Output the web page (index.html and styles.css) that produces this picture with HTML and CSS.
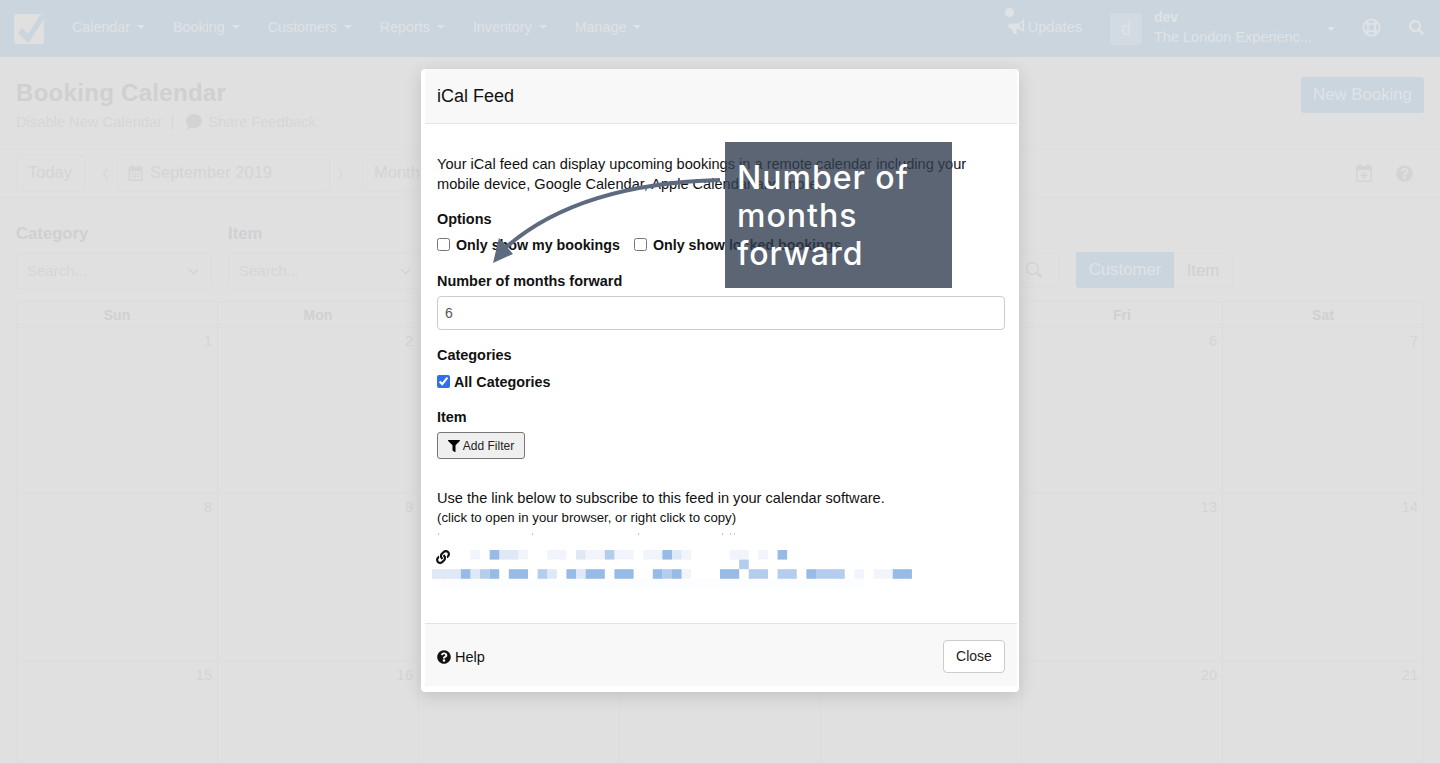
FILE: index.html
```html
<!DOCTYPE html>
<html lang="en">

<head>
  <meta charset="UTF-8">
  <meta name="viewport" content="width=device-width, initial-scale=1.0">
  <title>Booking Calendar</title>
  <link rel="stylesheet" href="styles.css">
</head>

<body>
  <div class="page">
    <nav class="navbar">
      <div class="logo">
        <svg viewBox="0 0 30 30" width="30" height="30"><path class="logo-check" d="M8 14l6 6L26 1h4v4L15 28h-2L4 19z"/></svg>
      </div>
      <a class="nav-link">Calendar<i class="caret"></i></a>
      <a class="nav-link">Booking<i class="caret"></i></a>
      <a class="nav-link">Customers<i class="caret"></i></a>
      <a class="nav-link">Reports<i class="caret"></i></a>
      <a class="nav-link">Inventory<i class="caret"></i></a>
      <a class="nav-link">Manage<i class="caret"></i></a>

      <div class="nav-right">
        <a class="updates">
          <i class="updates-dot"></i>
          <svg class="nav-icon" viewBox="0 0 20 18" width="18" height="16"><path d="M18 0v14l-1 0-5-3H9l1 6H6L4 11H3a3 3 0 0 1 0-6h9l5-4zM16 3.500l-3 2.500v3.500l3 2z"/></svg>
          Updates
        </a>
        <div class="avatar">d</div>
        <div class="account">
          <div class="account-name">dev</div>
          <div class="account-org">The London Experienc...</div>
        </div>
        <i class="caret account-caret"></i>
        <svg class="help-ring" viewBox="0 0 20 20" width="19" height="19">
          <circle cx="10" cy="10" r="8.500"/>
          <circle cx="10" cy="10" r="4"/>
          <path d="M4 4l3.200 3.200M16 4l-3.200 3.200M4 16l3.200-3.200M16 16l-3.200-3.200"/>
        </svg>
        <svg class="nav-icon" viewBox="0 0 512 512" width="15" height="15"><path d="M505 442.700L405.300 343c-4.500-4.500-10.600-7-17-7H372c27.600-35.300 44-79.700 44-128C416 93.100 322.900 0 208 0S0 93.100 0 208s93.100 208 208 208c48.300 0 92.700-16.400 128-44v16.300c0 6.400 2.500 12.500 7 17l99.700 99.700c9.400 9.400 24.600 9.400 33.900 0l28.300-28.300c9.400-9.400 9.400-24.600.1-34zM208 336c-70.700 0-128-57.200-128-128 0-70.700 57.200-128 128-128 70.700 0 128 57.200 128 128 0 70.700-57.200 128-128 128z"/></svg>
      </div>
    </nav>

    <header class="page-head">
      <div>
        <h1>Booking Calendar</h1>
        <div class="head-links">
          <span>Disable New Calendar</span>
          <span class="head-sep"></span>
          <svg class="bubble" viewBox="0 0 16 16" width="16" height="16"><path d="M8 0c4.400 0 8 3 8 7s-3.600 7-8 7c-1 0-2-.2-3-.5C4 14.500 2.500 16 1 16c1-1 1.600-2.500 1.500-3.800C1 11 0 9.100 0 7c0-4 3.600-7 8-7z"/></svg>
          <span>Share Feedback</span>
        </div>
      </div>
      <a class="btn-new">New Booking</a>
    </header>

    <section class="toolbar">
      <a class="tool-btn today">Today</a>
      <span class="chevron chevron-left"></span>
      <div class="tool-btn date-box">
        <svg viewBox="0 0 14 16" width="15" height="16"><path d="M3 0h2v2h4V0h2v2h3v14H0V2h3zM1.500 6v8.500h11V6zM3 7.500h2v2H3zm3 0h2v2H6zm3 0h2v2H9zm-6 3h2v2H3zm3 0h2v2H6zm3 0h2v2H9z"/></svg>
        September 2019
      </div>
      <span class="chevron chevron-right"></span>
      <a class="tool-btn month">Month</a>
      <div class="tool-right">
        <svg viewBox="0 0 16 18" width="16" height="18"><path d="M3 0h2v2h6V0h2v2h3v16H0V2h3zM1.500 6v10.500h13V6zM7.200 8h1.600v2.700h2.700v1.600H8.800V15H7.200v-2.700H4.500v-1.600h2.700z"/></svg>
        <svg viewBox="0 0 512 512" width="17" height="17"><path d="M504 256c0 136.997-111.043 248-248 248S8 392.997 8 256C8 119.083 119.043 8 256 8s248 111.083 248 248zM262.655 90c-54.497 0-89.255 22.957-116.549 63.758-3.536 5.286-2.353 12.415 2.715 16.258l34.699 26.310c5.205 3.947 12.621 3.008 16.665-2.122 17.864-22.658 30.113-35.797 57.303-35.797 20.429 0 45.698 13.148 45.698 32.958 0 14.976-12.363 22.667-32.534 33.976C247.128 238.528 216 254.941 216 296v4c0 6.627 5.373 12 12 12h56c6.627 0 12-5.373 12-12v-1.333c0-28.462 83.186-29.647 83.186-106.667 0-58.002-60.165-102-116.531-102zM256 338c-25.365 0-46 20.635-46 46 0 25.364 20.635 46 46 46s46-20.636 46-46c0-25.365-20.635-46-46-46z"/></svg>
      </div>
    </section>

    <section class="filters">
      <div class="filter">
        <label>Category</label>
        <div class="select">Search...<span class="select-arrow"></span></div>
      </div>
      <div class="filter">
        <label>Item</label>
        <div class="select">Search...<span class="select-arrow"></span></div>
      </div>
      <div class="filter-right">
        <div class="search-box">
          <svg viewBox="0 0 512 512" width="16" height="16"><path d="M505 442.700L405.300 343c-4.500-4.500-10.600-7-17-7H372c27.600-35.300 44-79.700 44-128C416 93.100 322.900 0 208 0S0 93.100 0 208s93.100 208 208 208c48.300 0 92.700-16.400 128-44v16.300c0 6.400 2.500 12.500 7 17l99.700 99.700c9.400 9.400 24.600 9.400 33.900 0l28.300-28.300c9.400-9.400 9.400-24.600.1-34zM208 368c-88.400 0-160-71.600-160-160 0-88.400 71.600-160 160-160 88.400 0 160 71.600 160 160 0 88.400-71.600 160-160 160z"/></svg>
        </div>
        <div class="toggle">
          <a class="toggle-on">Customer</a>
          <a class="toggle-off">Item</a>
        </div>
      </div>
    </section>

    <!-- middle columns sit behind the modal, so their labels are left out -->
    <section class="calendar">
      <div class="weekday">Sun</div>
      <div class="weekday">Mon</div>
      <div class="weekday"></div>
      <div class="weekday"></div>
      <div class="weekday"></div>
      <div class="weekday">Fri</div>
      <div class="weekday">Sat</div>

      <div class="day">1</div>
      <div class="day">2</div>
      <div class="day"></div>
      <div class="day"></div>
      <div class="day"></div>
      <div class="day">6</div>
      <div class="day">7</div>

      <div class="day">8</div>
      <div class="day">9</div>
      <div class="day"></div>
      <div class="day"></div>
      <div class="day"></div>
      <div class="day">13</div>
      <div class="day">14</div>

      <div class="day">15</div>
      <div class="day">16</div>
      <div class="day"></div>
      <div class="day"></div>
      <div class="day"></div>
      <div class="day">20</div>
      <div class="day">21</div>
    </section>
  </div>

  <div class="modal">
    <div class="modal-header">iCal Feed</div>

    <div class="modal-body">
      <p class="intro">Your iCal feed can display upcoming bookings in a remote calendar including your mobile device, Google Calendar, Apple Calendar and more.</p>

      <div class="field-title options-title">Options</div>
      <div class="check-row">
        <label class="check"><input type="checkbox"> Only show my bookings</label>
        <label class="check"><input type="checkbox"> Only show locked bookings</label>
      </div>

      <div class="field-title months-title">Number of months forward</div>
      <input class="text-input" type="text" value="6">

      <div class="field-title categories-title">Categories</div>
      <label class="check all-cats"><input type="checkbox" checked> All Categories</label>

      <div class="field-title item-title">Item</div>
      <button class="btn-filter">
        <svg viewBox="0 0 512 512" width="12" height="12"><path d="M487.976 0H24.028C2.710 0-8.047 25.866 7.058 40.971L192 225.941V432c0 7.831 3.821 15.170 10.237 19.662l80 55.980C298.020 518.690 320 507.493 320 487.980V225.941l184.947-184.970C520.021 25.896 509.338 0 487.976 0z"/></svg>
        Add Filter
      </button>

      <p class="link-intro">Use the link below to subscribe to this feed in your calendar software.</p>
      <p class="link-hint">(click to open in your browser, or right click to copy)</p>
      <!-- third line of the hint is covered, only the tips of a few letters show -->
      <svg class="link-tips" viewBox="0 0 300 9" width="300" height="9">
        <path d="M1 5h1v2H1zM95 5h1v2h-1zM201 5h1v2h-1zM285 5h1v2h-1zM293 5h1v2h-1zM297 5h1v2h-1z"/>
      </svg>

      <div class="feed-link">
        <!-- url is pixelated in the shot, one rect per block -->
        <svg class="feed-pixels" viewBox="0 0 50 4" width="480" height="38.400">
          <g class="px-vl">
            <rect x="4" y="0" width="1" height="1"/><rect x="9" y="0" width="1" height="1"/><rect x="12" y="0" width="2" height="1"/><rect x="16" y="0" width="2" height="1"/><rect x="19" y="0" width="2" height="1"/><rect x="22" y="0" width="2" height="1"/><rect x="26" y="0" width="1" height="1"/><rect x="31" y="0" width="2" height="1"/><rect x="34" y="0" width="1" height="1"/>
            <rect x="26" y="2" width="1" height="1"/><rect x="44" y="2" width="1" height="1"/><rect x="46" y="2" width="2" height="1"/>
            <rect x="1" y="3" width="44" height="1" class="px-faint"/>
          </g>
          <g class="px-l">
            <rect x="7" y="0" width="2" height="1"/><rect x="15" y="0" width="1" height="1"/><rect x="25" y="0" width="1" height="1"/>
            <rect x="0" y="2" width="3" height="1"/><rect x="4" y="2" width="1" height="1"/><rect x="12" y="2" width="1" height="1"/><rect x="15" y="2" width="1" height="1"/>
          </g>
          <g class="px-m">
            <rect x="18" y="0" width="1" height="1"/><rect x="32" y="1" width="1" height="1"/>
            <rect x="5" y="2" width="1" height="1"/><rect x="24" y="2" width="1" height="1"/><rect x="33" y="2" width="2" height="1"/><rect x="36" y="2" width="2" height="1"/><rect x="40" y="2" width="3" height="1"/><rect x="11" y="2" width="1" height="1"/>
          </g>
          <g class="px-d">
            <rect x="6" y="0" width="1" height="1"/><rect x="24" y="0" width="1" height="1"/><rect x="36" y="0" width="1" height="1"/>
            <rect x="3" y="2" width="1" height="1"/><rect x="6" y="2" width="1" height="1"/><rect x="8" y="2" width="2" height="1"/><rect x="14" y="2" width="1" height="1"/><rect x="16" y="2" width="2" height="1"/><rect x="19" y="2" width="2" height="1"/><rect x="23" y="2" width="1" height="1"/><rect x="25" y="2" width="1" height="1"/><rect x="30" y="2" width="2" height="1"/><rect x="39" y="2" width="1" height="1"/><rect x="48" y="2" width="2" height="1"/>
          </g>
        </svg>
        <svg class="link-icon" viewBox="0 0 512 512" width="14" height="14"><path d="M326.612 185.391c59.747 59.809 58.927 155.698.36 214.590-.11.120-.24.250-.36.370l-67.200 67.200c-59.270 59.270-155.699 59.262-214.960 0-59.270-59.260-59.270-155.700 0-214.960l37.106-37.106c9.840-9.840 26.786-3.300 27.294 10.606.648 17.722 3.826 35.527 9.690 52.721 1.986 5.822.567 12.262-3.783 16.612l-13.087 13.087c-28.026 28.026-28.905 73.660-1.155 101.960 28.024 28.579 74.086 28.749 102.325.510l67.200-67.190c28.191-28.191 28.073-73.757 0-101.830-3.701-3.694-7.429-6.564-10.341-8.569a16.037 16.037 0 0 1-6.947-12.606c-.396-10.567 3.348-21.456 11.698-29.806l21.054-21.055c5.521-5.521 14.182-6.199 20.584-1.731a152.482 152.482 0 0 1 20.522 17.197zM467.547 44.449c-59.261-59.262-155.690-59.270-214.960 0l-67.200 67.200c-.120.120-.250.250-.360.370-58.566 58.892-59.387 154.781.360 214.590a152.454 152.454 0 0 0 20.521 17.196c6.402 4.468 15.064 3.789 20.584-1.731l21.054-21.055c8.350-8.350 12.094-19.239 11.698-29.806a16.037 16.037 0 0 0-6.947-12.606c-2.912-2.005-6.640-4.875-10.341-8.569-28.073-28.073-28.191-73.639 0-101.830l67.200-67.190c28.239-28.239 74.300-28.069 102.325.510 27.750 28.300 26.872 73.934-1.155 101.960l-13.087 13.087c-4.350 4.350-5.769 10.790-3.783 16.612 5.864 17.194 9.042 34.999 9.690 52.721.509 13.906 17.454 20.446 27.294 10.606l37.106-37.106c59.271-59.259 59.271-155.699.001-214.959z"/></svg>
      </div>
    </div>

    <div class="modal-footer">
      <a class="help-link">
        <svg viewBox="0 0 512 512" width="14" height="14"><path d="M504 256c0 136.997-111.043 248-248 248S8 392.997 8 256C8 119.083 119.043 8 256 8s248 111.083 248 248zM262.655 90c-54.497 0-89.255 22.957-116.549 63.758-3.536 5.286-2.353 12.415 2.715 16.258l34.699 26.310c5.205 3.947 12.621 3.008 16.665-2.122 17.864-22.658 30.113-35.797 57.303-35.797 20.429 0 45.698 13.148 45.698 32.958 0 14.976-12.363 22.667-32.534 33.976C247.128 238.528 216 254.941 216 296v4c0 6.627 5.373 12 12 12h56c6.627 0 12-5.373 12-12v-1.333c0-28.462 83.186-29.647 83.186-106.667 0-58.002-60.165-102-116.531-102zM256 338c-25.365 0-46 20.635-46 46 0 25.364 20.635 46 46 46s46-20.636 46-46c0-25.365-20.635-46-46-46z"/></svg>
        Help
      </a>
      <button class="btn-close">Close</button>
    </div>
  </div>

  <!-- tutorial annotation over the modal -->
  <div class="callout">Number of months forward</div>
  <svg class="callout-arrow" viewBox="0 0 240 100" width="240" height="100">
    <path class="arrow-line" d="M230 5C150 7 70 24 14 74"/>
    <path class="arrow-head" d="M3 88L9 63L23 79z"/>
  </svg>
</body>

</html>
```

FILE: styles.css
```css
* {
  margin: 0;
  padding: 0;
  box-sizing: border-box;
}

html,
body {
  height: 100%;
  overflow: hidden;
}

body {
  position: relative;
  font-family: "Liberation Sans", Arial, sans-serif;
  font-size: 14px;
  background-color: #e0e0e0;
  color: #cfd0d2;
}

.page {
  height: 763px;
  overflow: hidden;
}

/* navbar */
.navbar {
  display: flex;
  align-items: center;
  height: 57px;
  padding-left: 14px;
  background-color: #cbd5dd;
  color: #dfe3e6;
}

.logo {
  width: 30px;
  height: 30px;
  margin-right: 28px;
  background-color: #e0e0e0;
  border-radius: 3px;
}

.logo svg {
  display: block;
}

.logo-check {
  fill: #cbd5dd;
}

.nav-link {
  display: flex;
  align-items: center;
  margin: -3px 28px 0 0;
  font-size: 14.300px;
}

.caret {
  flex: none;
  width: 8px;
  height: 4px;
  margin-left: 7px;
  border-top: 4px solid #dfe3e6;
  border-left: 4px solid transparent;
  border-right: 4px solid transparent;
}

.nav-right {
  display: flex;
  align-items: center;
  margin-left: auto;
  padding-right: 16px;
}

.nav-icon {
  fill: #dfe3e6;
}

.updates {
  position: relative;
  display: flex;
  align-items: center;
  gap: 2px;
  margin: -3px 28px 0 0;
  font-size: 14.600px;
}

.updates-dot {
  position: absolute;
  top: -11px;
  left: -3px;
  width: 9px;
  height: 9px;
  background-color: #dfe3e6;
  border-radius: 50%;
}

.avatar {
  width: 32px;
  height: 32px;
  margin-right: 12px;
  background-color: #d3dbe2;
  border-radius: 3px;
  font-size: 18px;
  line-height: 33px;
  text-align: center;
}

.account {
  width: 169px;
  margin-top: -3px;
}

.account-name {
  font-weight: 700;
  line-height: 20px;
}

.account-org {
  font-size: 14.500px;
  line-height: 20px;
  white-space: nowrap;
}

.account-caret {
  margin-left: 4px;
}

.help-ring {
  margin: -3px 28px 0 27px;
  fill: none;
  stroke: #dfe3e6;
  stroke-width: 2;
}

.help-ring path {
  stroke-width: 3.500;
}

.nav-right > .nav-icon {
  margin-top: -3px;
}

/* page header */
.page-head {
  display: flex;
  justify-content: space-between;
  height: 91px;
  padding: 20px 16px 0;
}

.page-head h1 {
  font-size: 24px;
  line-height: 32px;
  font-weight: 700;
  letter-spacing: 0.3px;
}

.head-links {
  display: flex;
  align-items: center;
  height: 20px;
  margin-top: 3px;
  font-size: 14.700px;
  color: #d6d6d7;
}

.head-sep {
  width: 1px;
  height: 14px;
  margin: 0 13px 0 10px;
  background-color: #d6d6d6;
}

.bubble {
  margin-right: 6px;
  fill: #d2d3d5;
}

.btn-new {
  width: 123px;
  height: 36px;
  background-color: #cbd5dd;
  border-radius: 3px;
  color: #dfe3e6;
  font-size: 16.800px;
  line-height: 36px;
  text-align: center;
}

/* toolbar */
.toolbar {
  display: flex;
  align-items: center;
  height: 50px;
  padding: 0 16px;
  border-top: 1px solid #dddddd;
  border-bottom: 1px solid #dedede;
}

.tool-btn {
  display: flex;
  flex: none;
  align-items: center;
  height: 36px;
  padding: 0 11px 1px;
  border: 1px solid #dddddd;
  border-radius: 4px;
  font-size: 16.500px;
  color: #d3d4d6;
}

.today {
  width: 69px;
}

.date-box {
  gap: 7px;
  width: 213px;
  padding-left: 10px;
}

.date-box svg {
  fill: #d3d4d6;
}

.month {
  width: 100px;
}

.chevron {
  flex: none;
  width: 9px;
  height: 9px;
  border-left: 1px solid #d2d2d2;
  border-bottom: 1px solid #d2d2d2;
}

.chevron-left {
  margin: 0 5.500px 0 17.500px;
  transform: scaleX(0.7) rotate(45deg);
}

.chevron-right {
  margin: 0 19.500px 0 3.500px;
  transform: scaleX(0.7) rotate(225deg);
}

.tool-right {
  display: flex;
  align-items: center;
  gap: 24px;
  margin-left: auto;
  padding-right: 11px;
}

.tool-right svg {
  fill: #d3d4d6;
}

/* filters */
.filters {
  display: flex;
  gap: 16px;
  height: 103px;
  padding: 25px 16px 0;
}

.filter {
  flex: none;
  width: 196px;
}

.filter label {
  display: block;
  font-size: 16.700px;
  font-weight: 700;
  line-height: 22px;
  margin-bottom: 8px;
}

.select {
  position: relative;
  height: 36px;
  padding-left: 10px;
  border: 1px solid #dddddd;
  border-radius: 4px;
  font-size: 15px;
  line-height: 34px;
  color: #d6d6d7;
}

.select-arrow {
  position: absolute;
  top: 12px;
  right: 14px;
  width: 7px;
  height: 7px;
  border-right: 1px solid #cfcfcf;
  border-bottom: 1px solid #cfcfcf;
  transform: rotate(45deg);
}

.filter-right {
  display: flex;
  align-items: flex-start;
  gap: 16px;
  margin-left: auto;
  padding: 29px 191px 0 0;
}

.search-box {
  display: flex;
  align-items: center;
  justify-content: flex-end;
  width: 120px;
  height: 36px;
  padding-right: 17px;
  border: 1px solid #dddddd;
  border-radius: 4px;
}

.search-box svg {
  fill: #d3d4d6;
}

.toggle {
  display: flex;
  height: 36px;
  border: 1px solid #dddddd;
  border-radius: 3px;
  font-size: 16.800px;
  line-height: 36px;
}

.toggle-on {
  width: 98px;
  margin: -1px 0 -1px -1px;
  background-color: #cbd5dd;
  border-radius: 3px 0 0 3px;
  color: #dfe3e6;
  text-align: center;
}

.toggle-off {
  width: 58px;
  text-align: center;
}

/* calendar */
.calendar {
  display: grid;
  grid-template-columns: repeat(7, 201px);
  grid-template-rows: 26px 166px 168px 168px;
  margin-left: 16px;
  width: 1408px;
  border-top: 1px solid #dddddd;
  border-left: 1px solid #dddddd;
}

.weekday {
  border-right: 1px solid #dddddd;
  border-bottom: 1px solid #dddddd;
  font-weight: 700;
  line-height: 27px;
  text-align: center;
}

.day {
  padding: 3px 5px 0 0;
  border-right: 1px solid #dddddd;
  border-bottom: 1px solid #dddddd;
  font-size: 14.500px;
  line-height: 20px;
  text-align: right;
  color: #d4d4d4;
}

/* modal */
.modal {
  position: absolute;
  top: 69px;
  left: 421px;
  display: flex;
  flex-direction: column;
  width: 598px;
  height: 623px;
  padding: 0 2px 6px 4px;
  background-color: #fff;
  border-radius: 4px;
  box-shadow: 0 4px 18px rgba(0, 0, 0, 0.14);
  color: #111;
}

.modal-header {
  flex: none;
  height: 55px;
  padding-left: 12px;
  background-color: #f8f8f8;
  border-bottom: 1px solid #e3e3e3;
  font-size: 18px;
  line-height: 54px;
}

.modal-body {
  flex: 1;
  padding: 30px 10px 0 12px;
  line-height: 20px;
}

.intro {
  font-size: 14.600px;
}

.field-title {
  font-size: 14.450px;
  font-weight: 700;
}

.options-title {
  margin-top: 15px;
}

.check-row {
  display: flex;
  gap: 14px;
  margin-top: 6px;
}

.check {
  display: flex;
  align-items: center;
  gap: 6px;
  font-weight: 700;
  font-size: 14.250px;
}

.check input {
  margin: 0 0 2px;
  accent-color: #2f6fed;
}

.months-title {
  margin-top: 16px;
}

.text-input {
  display: block;
  width: 568px;
  height: 34px;
  margin-top: 5px;
  padding: 0 7px;
  border: 1px solid #ccc;
  border-radius: 4px;
  font-family: inherit;
  font-size: 14px;
  color: #555;
}

.categories-title {
  margin-top: 15px;
}

.all-cats {
  gap: 4px;
  margin-top: 7px;
  font-size: 14.350px;
}

.item-title {
  margin-top: 15px;
}

.btn-filter {
  display: flex;
  align-items: center;
  justify-content: center;
  gap: 3px;
  width: 88px;
  height: 27px;
  margin-top: 5px;
  background-color: #efefef;
  border: 1px solid #777;
  border-radius: 3px;
  font-family: inherit;
  font-size: 12px;
  color: #222;
}

.link-intro {
  margin-top: 29px;
  font-size: 14.600px;
}

.link-hint {
  font-size: 13.200px;
}

.link-tips {
  display: block;
  fill: #c4c4c4;
}

.feed-link {
  position: relative;
  margin: 12.500px 0 0 -5px;
}

.feed-pixels {
  display: block;
}

.link-icon {
  position: absolute;
  top: 0;
  left: 4px;
  fill: #111;
}

.px-vl {
  fill: #f1f5fb;
}

.px-faint {
  fill: #fcfdfe;
}

.px-l {
  fill: #dfe8f6;
}

.px-m {
  fill: #b5cdec;
}

.px-d {
  fill: #97bae6;
}

.modal-footer {
  flex: none;
  display: flex;
  align-items: center;
  justify-content: space-between;
  height: 63px;
  padding: 2px 12px 0 12px;
  background-color: #f8f8f8;
  border-top: 1px solid #e3e3e3;
}

.help-link {
  display: flex;
  align-items: center;
  gap: 4px;
  margin-top: 2px;
  font-size: 14.500px;
}

.help-link svg {
  fill: #111;
}

.btn-close {
  width: 62px;
  height: 33px;
  background-color: #fff;
  border: 1px solid #ccc;
  border-radius: 4px;
  font-family: inherit;
  font-size: 14px;
  color: #222;
}

/* annotation */
.callout {
  position: absolute;
  top: 142px;
  left: 725px;
  width: 227px;
  height: 146px;
  padding: 17px 12px 0;
  background-color: rgba(51, 62, 81, 0.8);
  color: #fff;
  font-family: Inter, "Open Sans", sans-serif;
  font-size: 32px;
  font-weight: 500;
  letter-spacing: 1px;
  line-height: 38px;
}

.callout-arrow {
  position: absolute;
  top: 175px;
  left: 490px;
}

.arrow-line {
  fill: none;
  stroke: #5d6a7f;
  stroke-width: 4;
}

.arrow-head {
  fill: #5d6a7f;
}
```
